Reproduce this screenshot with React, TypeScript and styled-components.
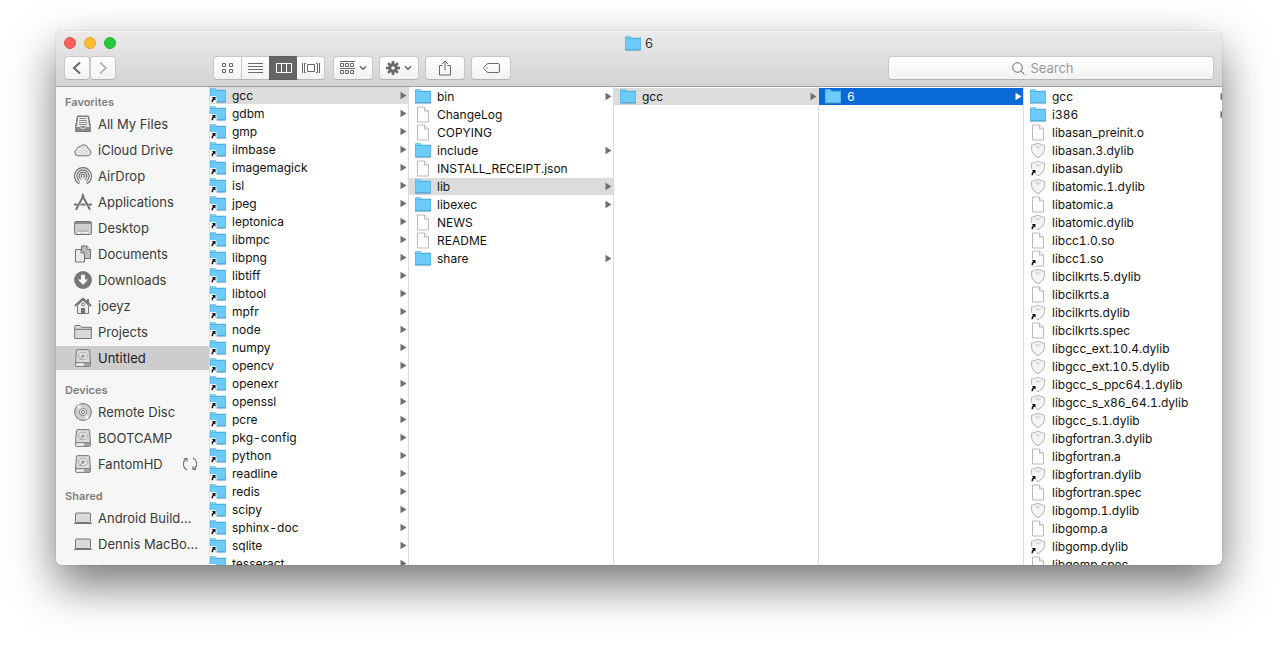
import React from "react";
import styled, { createGlobalStyle, css } from "styled-components";

const GlobalStyle = createGlobalStyle`
  *, *::before, *::after { box-sizing: border-box; }
  body {
    margin: 0;
    background: #fff;
    font-family: Inter, "Liberation Sans", sans-serif;
    font-size: 13px;
    color: #111;
  }
  button, input { font: inherit; color: inherit; }
`;

const Desktop = styled.main`
  height: 100vh;
  min-height: 320px;
  padding: 31px 56px 80px;
`;

const Window = styled.section`
  display: flex;
  flex-direction: column;
  height: 100%;
  border-radius: 6px;
  overflow: hidden;
  background: #fff;
  box-shadow: 0 0 1px rgba(0, 0, 0, 0.5), 0 20px 46px rgba(0, 0, 0, 0.54);
`;

const Header = styled.header`
  flex: none;
  display: flex;
  flex-direction: column;
  gap: 1px;
  padding: 0 8px 6px;
  background: linear-gradient(#ebebec, #d3d3d4);
  border-bottom: 1px solid #a0a0a0;
  box-shadow: inset 0 1px 0 #f6f6f6;
`;

const TitleBar = styled.div`
  display: grid;
  grid-template-columns: 1fr auto 1fr;
  align-items: center;
  height: 24px;
`;

const Lights = styled.div`
  display: flex;
  gap: 8px;
`;

const Light = styled.button<{ $fill: string; $edge: string }>`
  width: 12px;
  height: 12px;
  padding: 0;
  border: 1px solid ${(p) => p.$edge};
  border-radius: 50%;
  background: ${(p) => p.$fill};
`;

const Title = styled.h1`
  display: flex;
  align-items: center;
  gap: 4px;
  margin: 0;
  font-size: 13px;
  line-height: 16px;
  font-weight: 400;
  color: #333;
`;

const Tools = styled.div`
  display: flex;
  align-items: center;
  gap: 6px;
  height: 24px;
`;

const ButtonPair = styled.div`
  display: flex;
  margin-right: 91px;
`;

const Segments = styled.div`
  display: flex;
  margin-right: 2px;
`;

const raised = css`
  background: linear-gradient(#fff, #f2f2f2);
  border: 1px solid #c8c8c8;
  border-bottom-color: #b4b4b4;
  border-radius: 4px;
`;

const ToolButton = styled.button<{ $width?: number }>`
  ${raised}
  display: flex;
  align-items: center;
  justify-content: center;
  gap: 4px;
  width: ${(p) => p.$width ?? 40}px;
  height: 24px;
  padding: 0;
  color: #696969;

  &:disabled { color: #b9b9b9; }
`;

const Segment = styled(ToolButton)`
  width: 28px;
  border-radius: 0;
  border-right-width: 0;

  &:first-child { border-radius: 4px 0 0 4px; }
  &:last-child { border-radius: 0 4px 4px 0; border-right-width: 1px; }
  &[aria-pressed="true"] {
    background: #656567;
    border-color: #5d5d5f;
    color: #fff;
  }
  &[aria-pressed="true"] + & { border-left-width: 0; }
`;

const SearchField = styled.label`
  ${raised}
  flex: 0 1 326px;
  display: flex;
  align-items: center;
  justify-content: center;
  gap: 5px;
  height: 24px;
  margin-left: auto;
  padding-right: 16px;
  color: #6a6a6a;
`;

const SearchInput = styled.input`
  field-sizing: content;
  max-width: 80%;
  padding: 0;
  border: 0;
  outline: 0;
  background: none;
  line-height: 16px;
  appearance: none;

  &::placeholder { color: #9a9a9a; opacity: 1; }
`;

const Body = styled.div`
  flex: 1;
  display: flex;
  min-height: 0;
`;

const Sidebar = styled.nav`
  flex: none;
  width: 154px;
  padding-top: 5px;
  overflow: hidden;
  background: #f6f6f6;
  border-right: 1px solid #dcdcdc;
`;

const SideGroup = styled.section`
  & + & { margin-top: 10px; }
`;

const SideHeading = styled.h2`
  margin: 0;
  padding-left: 9px;
  font-size: 11px;
  line-height: 20px;
  font-weight: 600;
  color: #7e7e7e;
`;

const SideList = styled.ul`
  display: flex;
  flex-direction: column;
  gap: 2px;
  margin: 0;
  padding: 0;
  list-style: none;
`;

const SideLink = styled.a<{ $current?: boolean }>`
  display: flex;
  align-items: center;
  gap: 6px;
  height: 24px;
  padding: 0 12px 0 18px;
  color: ${(p) => (p.$current ? "#1c1c1c" : "#3a3a3a")};
  background: ${(p) => (p.$current ? "#cdcdcd" : "transparent")};
  text-decoration: none;
  white-space: nowrap;

  svg { flex: none; }
`;

const SideLabel = styled.span`
  flex: 1;
`;

const Columns = styled.div`
  flex: 1;
  display: flex;
  min-width: 0;
  overflow: hidden;
  font-size: 12px;
  font-variant-numeric: tabular-nums;
`;

const Column = styled.ul<{ $scrolled?: boolean }>`
  flex: none;
  display: flex;
  flex-direction: column;
  gap: 1px;
  width: ${(p) => (p.$scrolled ? 199 : 205)}px;
  margin: 0;
  padding: ${(p) => (p.$scrolled ? 0 : 1)}px 0 0;
  overflow: hidden;
  border-right: 1px solid #dcdcdc;
  list-style: none;
`;

const Entry = styled.button<{ $tone?: "path" | "active"; $flush?: boolean }>`
  display: flex;
  align-items: center;
  gap: 6px;
  width: 100%;
  height: 17px;
  padding: 0 1px 0 ${(p) => (p.$flush ? 0 : 6)}px;
  border: 0;
  background: ${(p) => (p.$tone === "active" ? "#0a69d9" : p.$tone === "path" ? "#dcdcdc" : "transparent")};
  color: ${(p) => (p.$tone === "active" ? "#fff" : "inherit")};
  text-align: left;
  line-height: 17px;
  white-space: nowrap;

  svg { flex: none; }
`;

const EntryName = styled.span`
  flex: 1;
`;

const Badge = () => (
  <g>
    <path d="M0 9H4.500Q6.500 9 6.500 11V16H0Z" fill="#fff" />
    <path d="M1.800 10H5.500V13.700L4.300 12.500Q3 13.300 3 15.200H1.500Q1.300 12.800 3 11.200Z" fill="#111" />
  </g>
);

type Kind = "folder" | "doc" | "lib";

const FileIcon = ({ kind, alias }: { kind: Kind; alias?: boolean }) => (
  <svg width="16" height="17" viewBox="0 0 16 17" aria-hidden="true">
    {kind === "folder" && (
      <>
        <path d="M0 15V2.200Q0 1.200 1 1.200H5.200L6.800 2.800H16V15Z" fill="#4fb0e2" />
        <path d="M.6 14.500V4H15.400V14.500Z" fill="#6dcbfa" />
        <path d="M.8 3.300V2.500Q.8 2 1.300 2H5L6.400 3.300Z" fill="#7fd2fa" />
        <path d="M0 15H16" stroke="#4a9fcc" />
        <path d="M1 16H15" stroke="#000" strokeOpacity=".08" />
      </>
    )}
    {kind === "doc" && (
      <>
        <path d="M2.500 1H9.500L13.500 5V16H2.500Z" fill="#fdfdfd" stroke="#b9b9b9" />
        <path d="M9.500 1V5H13.500" fill="#f0f0f0" stroke="#b9b9b9" />
      </>
    )}
    {kind === "lib" && (
      <>
        <path d="M8 1.200 14.500 3.400Q14.900 8 13.400 11 11.500 13.600 8 15.800 4.500 13.600 2.600 11 1.100 8 1.500 3.400Z" fill="#f3f3f3" stroke="#bcbcbc" strokeWidth="1.100" strokeLinejoin="round" />
        <path d="M8 3.800 11.500 4.800 8 7 4.500 4.800Z" fill="#dcdcdc" />
        <path d="M3.500 5.500Q3.500 9 4.600 10.500 6 12.500 8 13.600 10 12.500 11.400 10.500 12.500 9 12.500 5.500" fill="none" stroke="#fff" />
      </>
    )}
    {alias && <Badge />}
  </svg>
);

const Arrow = () => (
  <svg width="7" height="9" viewBox="0 0 7 9" aria-hidden="true">
    <path d="M.5 .8 6.500 4.500 .5 8.200Z" fill="currentColor" />
  </svg>
);

const ArrowBox = styled.span<{ $active?: boolean }>`
  display: flex;
  color: ${(p) => (p.$active ? "#fff" : "#6f6f6f")};
`;

const Chevron = () => (
  <svg width="8" height="6" viewBox="0 0 8 6" fill="none" stroke="currentColor" strokeWidth="1.600" aria-hidden="true">
    <path d="M1 1.200 4 4.200 7 1.200" />
  </svg>
);

const Glyph = ({ w, h, sw = 1, children }: { w: number; h: number; sw?: number; children: React.ReactNode }) => (
  <svg width={w} height={h} viewBox={`0 0 ${w} ${h}`} fill="none" stroke="currentColor" strokeWidth={sw} aria-hidden="true">
    {children}
  </svg>
);

const Gear = () => (
  <svg width="14" height="14" viewBox="-7 -7 14 14" aria-hidden="true">
    {[0, 45, 90, 135].map((a) => (
      <rect key={a} x="-1.300" y="-7" width="2.600" height="14" fill="currentColor" transform={`rotate(${a})`} />
    ))}
    <circle r="4.800" fill="currentColor" />
    <circle r="1.800" fill="#f8f8f8" />
  </svg>
);

const Drive = () => (
  <>
    <path d="M3.500 .6H14.500Q15.500 .6 15.600 1.600L16.400 13V16.400Q16.400 17.400 15.400 17.400H2.600Q1.600 17.400 1.600 16.400V13L2.400 1.600Q2.500 .6 3.500 .6Z" fill="#cfcfcf" stroke="#7c7c7c" />
    <path d="M4 2H14L14.700 12.500H3.300Z" fill="#e2e2e2" stroke="none" />
    <ellipse cx="9" cy="7" rx="4.300" ry="3.800" fill="#e9e9e9" stroke="#9a9a9a" strokeWidth=".8" />
    <path d="M9 7 5.500 11.300" stroke="#8a8a8a" />
    <ellipse cx="9" cy="7" rx="1.500" ry="1.300" fill="#bbb" stroke="#8a8a8a" strokeWidth=".8" />
    <path d="M2 13.700H16" stroke="#7c7c7c" />
    <path d="M2.500 15.600H10" stroke="#f0f0f0" strokeWidth="2" />
    <path d="M11 14V17M13 14V17M15 14V17" stroke="#7c7c7c" />
  </>
);

const Laptop = () => (
  <>
    <rect x="1.500" y="4" width="15" height="9.500" rx=".8" fill="#dadada" stroke="#747474" />
    <path d="M.3 14.300H17.700" stroke="#747474" strokeWidth="1.600" />
  </>
);

const sideIcons: Record<string, React.ReactNode> = {
  files: (
    <>
      <path d="M3.500 1H14.500L16.300 11V16.500H1.700V11Z" fill="#8a8a8a" stroke="#747474" />
      <path d="M4.300 2H13.700L15 11H3Z" fill="#f4f4f4" stroke="none" />
      <path d="M5.500 3.500H12.500M5.200 5.500H12.800M5 7.500H13M4.800 9.500H13.200" stroke="#8a8a8a" />
      <path d="M2 11.500H6L7 13.300H11L12 11.500H16" stroke="#ddd" />
    </>
  ),
  cloud: (
    <path d="M4 14.800A3.400 3.400 0 0 1 2.800 8.300 2.700 2.700 0 0 1 6 5.700 4.700 4.700 0 0 1 14.400 8 3.500 3.500 0 0 1 14.300 14.800Z" fill="#e2e2e2" stroke="#747474" />
  ),
  airdrop: (
    <g strokeWidth="1.200">
      <path d="M5.400 16.700A8.400 8.400 0 1 1 12.600 16.700" />
      <path d="M5.300 13.800A6.100 6.100 0 1 1 12.700 13.800" />
      <path d="M6.400 11.900A3.900 3.900 0 1 1 11.600 11.900" />
      <path d="M7.800 10.300A1.800 1.800 0 1 1 10.200 10.300" />
      <path d="M9 9.500 4.800 15.800M9 9.500 13.200 15.800" strokeDasharray="1.500 1.400" stroke="#aaa" />
    </g>
  ),
  apps: (
    <>
      <path d="M9.800 2.200 3.500 13.800 2 16.800" strokeWidth="2" />
      <path d="M8.200 2.200 14.500 13.800 16 16.800" strokeWidth="2" />
      <path d="M0 11.500H3.500M6.500 11.500H11.500M14.500 11.500H18" strokeWidth="2" />
      <path d="M8.300 .5 9.500 3" strokeWidth="1.500" />
    </>
  ),
  desktop: (
    <>
      <rect x=".6" y="2.500" width="16.800" height="13" rx="1" fill="#cfcfcf" stroke="#747474" />
      <path d="M1 4H17" stroke="#747474" strokeWidth="1.500" />
      <path d="M4 13.500H14" stroke="#fafafa" strokeWidth="2" strokeDasharray="2 .7" />
      <path d="M4 12.100H14.500" stroke="#747474" strokeWidth=".6" />
    </>
  ),
  documents: (
    <>
      <path d="M7.500 1H13L16.500 4.500V13.500H7.500Z" fill="#bdbdbd" stroke="#747474" />
      <path d="M13 1V4.500H16.500" fill="#eee" stroke="#747474" />
      <path d="M1.500 4.500H7L10.500 8V17H1.500Z" fill="#eaeaea" stroke="#747474" />
      <path d="M7 4.500V8H10.500" stroke="#747474" />
    </>
  ),
  downloads: (
    <>
      <circle cx="9" cy="9" r="8.900" fill="#777" stroke="none" />
      <path d="M7 3.800H11V8.500H14L9 14 4 8.500H7Z" fill="#fafafa" stroke="none" />
    </>
  ),
  home: (
    <>
      <path d="M3.500 8.500V16.500H14.500V8.500L9 3Z" fill="#eaeaea" stroke="#747474" />
      <path d="M.8 9 9 1.500 17.200 9" strokeWidth="1.800" />
      <path d="M14 2V6" strokeWidth="2" />
      <path d="M7 16.500V11H11V16.500Z" fill="#747474" stroke="none" />
      <circle cx="9" cy="7.500" r="1.400" fill="#fff" stroke="#747474" />
    </>
  ),
  projects: (
    <>
      <path d="M.7 15.500V3.500Q.7 2.500 1.500 2.500H6L7.500 4.300H17.300V15.500Z" fill="#dadada" stroke="#747474" />
      <path d="M1 6.300H17" stroke="#747474" />
    </>
  ),
  drive: <Drive />,
  disc: (
    <>
      <circle cx="9" cy="9" r="8.400" fill="#cecece" stroke="#747474" />
      <path d="M9 9 3 3.600A8 8 0 0 1 6 1.600ZM9 9 15 14.400A8 8 0 0 1 12 16.400Z" fill="#f2f2f2" stroke="none" />
      <circle cx="9" cy="9" r="3.600" fill="#e6e6e6" stroke="#8a8a8a" />
      <circle cx="9" cy="9" r="1.500" fill="#fff" stroke="#747474" />
    </>
  ),
  laptop: <Laptop />,
};

const SyncIcon = () => (
  <svg width="14" height="14" viewBox="0 0 14 14" fill="none" stroke="#7a7a7a" strokeWidth="1.300" aria-hidden="true">
    <path d="M4.300 13A6.300 6.300 0 0 1 3 2M9.700 1A6.300 6.300 0 0 1 11 12" />
    <path d="M.8 1.700H4V4.600M13.200 12.300H10V9.400" />
  </svg>
);

type SideItem = { icon: string; label: string; current?: boolean; sync?: boolean };

const sidebar: { title: string; items: SideItem[] }[] = [
  {
    title: "Favorites",
    items: [
      { icon: "files", label: "All My Files" },
      { icon: "cloud", label: "iCloud Drive" },
      { icon: "airdrop", label: "AirDrop" },
      { icon: "apps", label: "Applications" },
      { icon: "desktop", label: "Desktop" },
      { icon: "documents", label: "Documents" },
      { icon: "downloads", label: "Downloads" },
      { icon: "home", label: "joeyz" },
      { icon: "projects", label: "Projects" },
      { icon: "drive", label: "Untitled", current: true },
    ],
  },
  {
    title: "Devices",
    items: [
      { icon: "disc", label: "Remote Disc" },
      { icon: "drive", label: "BOOTCAMP" },
      { icon: "drive", label: "FantomHD", sync: true },
    ],
  },
  {
    title: "Shared",
    items: [
      { icon: "laptop", label: "Android Build..." },
      { icon: "laptop", label: "Dennis MacBo..." },
    ],
  },
];

type Item = { name: string; kind: Kind; alias?: boolean; tone?: "path" | "active" };

const folder = (name: string, tone?: Item["tone"]): Item => ({ name, kind: "folder", tone });
const doc = (name: string, alias = false): Item => ({ name, kind: "doc", alias });
const lib = (name: string, alias = false): Item => ({ name, kind: "lib", alias });

const optItems: Item[] = (
  "gcc gdbm gmp ilmbase imagemagick isl jpeg leptonica libmpc libpng libtiff libtool mpfr node numpy " +
  "opencv openexr openssl pcre pkg-config python readline redis scipy sphinx-doc sqlite tesseract"
)
  .split(" ")
  .map((name, i) => ({ name, kind: "folder", alias: true, tone: i === 0 ? "path" : undefined }));

const columns: Item[][] = [
  optItems,
  [
    folder("bin"),
    doc("ChangeLog"),
    doc("COPYING"),
    folder("include"),
    doc("INSTALL_RECEIPT.json"),
    folder("lib", "path"),
    folder("libexec"),
    doc("NEWS"),
    doc("README"),
    folder("share"),
  ],
  [folder("gcc", "path")],
  [folder("6", "active")],
  [
    folder("gcc"),
    folder("i386"),
    doc("libasan_preinit.o"),
    lib("libasan.3.dylib"),
    lib("libasan.dylib", true),
    lib("libatomic.1.dylib"),
    doc("libatomic.a"),
    lib("libatomic.dylib", true),
    doc("libcc1.0.so"),
    doc("libcc1.so", true),
    lib("libcilkrts.5.dylib"),
    doc("libcilkrts.a"),
    lib("libcilkrts.dylib", true),
    doc("libcilkrts.spec"),
    lib("libgcc_ext.10.4.dylib"),
    lib("libgcc_ext.10.5.dylib"),
    lib("libgcc_s_ppc64.1.dylib", true),
    lib("libgcc_s_x86_64.1.dylib", true),
    lib("libgcc_s.1.dylib"),
    lib("libgfortran.3.dylib"),
    doc("libgfortran.a"),
    lib("libgfortran.dylib", true),
    doc("libgfortran.spec"),
    lib("libgomp.1.dylib"),
    doc("libgomp.a"),
    lib("libgomp.dylib", true),
    doc("libgomp.spec"),
  ],
];

export default function App() {
  return (
    <>
      <GlobalStyle />
      <Desktop>
        <Window>
          <Header>
            <TitleBar>
              <Lights>
                <Light $fill="#fc605b" $edge="#e4504a" aria-label="Close" />
                <Light $fill="#fdbc2e" $edge="#e3a32a" aria-label="Minimize" />
                <Light $fill="#28c83e" $edge="#20b135" aria-label="Zoom" />
              </Lights>
              <Title>
                <FileIcon kind="folder" />
                6
              </Title>
            </TitleBar>
            <Tools>
              <ButtonPair>
                <ToolButton $width={26} aria-label="Back">
                  <Glyph w={10} h={14} sw={2}><path d="M8 1.500 2 7 8 12.500" /></Glyph>
                </ToolButton>
                <ToolButton $width={26} aria-label="Forward" disabled>
                  <Glyph w={10} h={14} sw={2}><path d="M2 1.500 8 7 2 12.500" /></Glyph>
                </ToolButton>
              </ButtonPair>
              <Segments>
                <Segment aria-label="Icon view" aria-pressed={false}>
                  <Glyph w={11} h={10}>
                    <path d="M.5.5h3v3h-3zM7.500.5h3v3h-3zM.5 6.500h3v3h-3zM7.500 6.500h3v3h-3z" />
                  </Glyph>
                </Segment>
                <Segment aria-label="List view" aria-pressed={false}>
                  <Glyph w={15} h={10}><path d="M0 .5H15M0 3.500H15M0 6.500H15M0 9.500H15" /></Glyph>
                </Segment>
                <Segment aria-label="Column view" aria-pressed={true}>
                  <Glyph w={16} h={10}><path d="M.5.5H15.500V9.500H.5ZM5.500.5V9.500M10.500.5V9.500" /></Glyph>
                </Segment>
                <Segment aria-label="Cover Flow view" aria-pressed={false}>
                  <Glyph w={18} h={10}>
                    <path d="M5.500 1.500H12.500V8.500H5.500ZM.5 0V10M17.500 0V10M4 9.500H2.500V.5H4M14 9.500H15.500V.5H14" />
                  </Glyph>
                </Segment>
              </Segments>
              <ToolButton aria-label="Arrange">
                <Glyph w={15} h={14}>
                  <path d="M0 .5H15M0 7.500H15M.5 2.500h3v3h-3zM5.500 2.500h3v3h-3zM10.500 2.500h3v3h-3zM.5 9.500h3v3h-3zM5.500 9.500h3v3h-3zM10.500 9.500h3v3h-3z" />
                </Glyph>
                <Chevron />
              </ToolButton>
              <ToolButton aria-label="Action">
                <Gear />
                <Chevron />
              </ToolButton>
              <ToolButton aria-label="Share">
                <Glyph w={12} h={16}><path d="M3.500 5.500H.5V15H11.500V5.500H8.500M6 10.500V1M3 4 6 1 9 4" /></Glyph>
              </ToolButton>
              <ToolButton aria-label="Tags">
                <Glyph w={17} h={10}>
                  <path d="M5 .5H15Q16.500.5 16.500 2V8Q16.500 9.500 15 9.500H5Q4 9.500 .8 5.700.3 5 .8 4.300 4 .5 5 .5Z" />
                  <circle cx="4" cy="5" r=".7" fill="currentColor" stroke="none" />
                </Glyph>
              </ToolButton>
              <SearchField>
                <Glyph w={13} h={13} sw={1}>
                  <circle cx="5.500" cy="5.500" r="4.800" />
                  <path d="M9 9 12.500 12.500" />
                </Glyph>
                <SearchInput type="text" placeholder="Search" aria-label="Search" />
              </SearchField>
            </Tools>
          </Header>
          <Body>
            <Sidebar aria-label="Places">
              {sidebar.map((group) => (
                <SideGroup key={group.title}>
                  <SideHeading>{group.title}</SideHeading>
                  <SideList>
                    {group.items.map((item) => (
                      <li key={item.label}>
                        <SideLink href="#" $current={item.current}>
                          <svg width="18" height="18" viewBox="0 0 18 18" fill="none" stroke="#747474" aria-hidden="true">
                            {sideIcons[item.icon]}
                          </svg>
                          <SideLabel>{item.label}</SideLabel>
                          {item.sync && <SyncIcon />}
                        </SideLink>
                      </li>
                    ))}
                  </SideList>
                </SideGroup>
              ))}
            </Sidebar>
            <Columns>
              {columns.map((items, c) => (
                <Column key={c} $scrolled={c === 0}>
                  {items.map((item) => (
                    <li key={item.name}>
                      <Entry $tone={item.tone} $flush={c === 0}>
                        <FileIcon kind={item.kind} alias={item.alias} />
                        <EntryName>{item.name}</EntryName>
                        {item.kind === "folder" && (
                          <ArrowBox $active={item.tone === "active"}>
                            <Arrow />
                          </ArrowBox>
                        )}
                      </Entry>
                    </li>
                  ))}
                </Column>
              ))}
            </Columns>
          </Body>
        </Window>
      </Desktop>
    </>
  );
}
